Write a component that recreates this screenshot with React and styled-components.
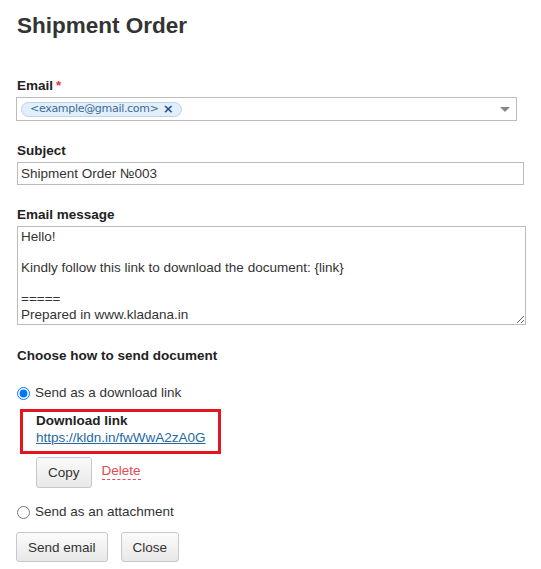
import React from 'react';
import styled, { createGlobalStyle } from 'styled-components';

const GlobalStyle = createGlobalStyle`
  body {
    margin: 0;
    background: #fff;
    font-family: "Liberation Sans", Arial, sans-serif;
    color: #333;
  }
`;

const Page = styled.div`
  padding: 12px 16px 0 16px;
  width: 541px;
  box-sizing: border-box;
`;

const Title = styled.h1`
  margin: 0 0 0 1px;
  font-size: 22.5px;
  line-height: 27px;
  font-weight: bold;
  color: #333;
`;

const Field = styled.div`
  margin-top: ${(p) => p.mt}px;
  display: flex;
  flex-direction: column;
  gap: 3px;
`;

const Label = styled.div`
  font-size: 13.5px;
  line-height: 16px;
  font-weight: bold;
  color: #222;
  padding-left: 1px;
`;

const Required = styled.span`
  color: #e0353b;
  margin-left: 3px;
`;

const SelectBox = styled.div`
  width: 501px;
  height: 24px;
  box-sizing: border-box;
  border: 1px solid #bbb;
  display: flex;
  align-items: center;
  padding: 0 6px 0 4px;
  justify-content: space-between;
`;

const Chip = styled.span`
  display: inline-flex;
  align-items: center;
  gap: 4px;
  height: 15px;
  box-sizing: border-box;
  padding: 0 7px 0 8px;
  border: 1px solid #b9d4ec;
  border-radius: 8px;
  background: #e2eef9;
  font-family: "DejaVu Sans", Verdana, sans-serif;
  font-size: 11px;
  letter-spacing: -0.3px;
  line-height: 12px;
  color: #3a6c98;
`;

const ChipClose = styled.span`
  font-family: "DejaVu Sans", sans-serif;
  font-weight: bold;
  color: #1d5486;
  font-size: 13px;
  line-height: 12px;
  letter-spacing: 0;
`;

const Caret = styled.span`
  width: 0;
  height: 0;
  border-left: 5px solid transparent;
  border-right: 5px solid transparent;
  border-top: 5px solid #888;
`;

const TextInput = styled.input`
  width: 507px;
  height: 23px;
  box-sizing: border-box;
  border: 1px solid #bbb;
  margin: 0 0 0 1px;
  padding: 0 3px;
  font-family: "Liberation Sans", Arial, sans-serif;
  font-size: 13.5px;
  color: #333;
  outline: none;
`;

const TextArea = styled.textarea`
  width: 509px;
  height: 99px;
  box-sizing: border-box;
  border: 1px solid #bbb;
  margin: 0 0 0 1px;
  padding: 2px 3px;
  font-family: "Liberation Sans", Arial, sans-serif;
  font-size: 13.5px;
  line-height: 15.5px;
  color: #333;
  resize: vertical;
  outline: none;
  overflow: hidden;
`;

const SectionTitle = styled(Label)`
  margin-top: 23px;
`;

const RadioRow = styled.label`
  display: flex;
  align-items: center;
  margin-top: ${(p) => p.mt}px;
  font-size: 13.5px;
  line-height: 16px;
  color: #333;
`;

const Radio = styled.input`
  width: 13px;
  height: 13px;
  margin: 0 5px 0 1px;
  accent-color: #0075ff;
`;

const LinkBlock = styled.div`
  padding-left: 4px;
  margin-top: 8px;
`;

const LinkBox = styled.div`
  display: inline-flex;
  flex-direction: column;
  border: 3px solid #e3161f;
  padding: 1px 12px 4px 13px;
`;

const LinkTitle = styled.div`
  font-size: 13.5px;
  line-height: 16px;
  font-weight: bold;
  color: #222;
`;

const Link = styled.a`
  font-size: 13.5px;
  line-height: 18px;
  color: #2468a2;
  text-decoration: underline;
`;

const Actions = styled.div`
  display: flex;
  align-items: center;
  gap: ${(p) => p.gap}px;
  margin-top: ${(p) => p.mt}px;
  padding-left: ${(p) => p.pl || 0}px;
`;

const Button = styled.button`
  height: ${(p) => p.h}px;
  padding: 0 ${(p) => p.px}px;
  border: 1px solid #c8c8c8;
  border-radius: 3px;
  background: linear-gradient(#fbfbfb, #e8e8e8);
  font-family: "Liberation Sans", Arial, sans-serif;
  font-size: 13.5px;
  color: #333;
  cursor: pointer;
`;

const DangerLink = styled.span`
  color: #e04a4f;
  font-size: 13.5px;
  line-height: 16px;
  border-bottom: 1px dashed #e04a4f;
  margin-top: -3px;
`;

export default function App() {
  return (
    <Page>
      <GlobalStyle />
      <Title>Shipment Order</Title>

      <Field mt={39}>
        <Label>
          Email<Required>*</Required>
        </Label>
        <SelectBox>
          <Chip>
            &lt;example@gmail.com&gt;<ChipClose>×</ChipClose>
          </Chip>
          <Caret />
        </SelectBox>
      </Field>

      <Field mt={22}>
        <Label>Subject</Label>
        <TextInput defaultValue="Shipment Order №003" />
      </Field>

      <Field mt={22}>
        <Label>Email message</Label>
        <TextArea
          defaultValue={
            'Hello!\n\nKindly follow this link to download the document: {link}\n\n=====\nPrepared in www.kladana.in'
          }
        />
      </Field>

      <SectionTitle>Choose how to send document</SectionTitle>

      <RadioRow mt={21}>
        <Radio type="radio" name="send" defaultChecked />
        Send as a download link
      </RadioRow>

      <LinkBlock>
        <LinkBox>
          <LinkTitle>Download link</LinkTitle>
          <Link href="#">https://kldn.in/fwWwA2zA0G</Link>
        </LinkBox>
        <Actions gap={10} mt={3} pl={16}>
          <Button h={31} px={11}>Copy</Button>
          <DangerLink>Delete</DangerLink>
        </Actions>
      </LinkBlock>

      <RadioRow mt={16}>
        <Radio type="radio" name="send" />
        Send as an attachment
      </RadioRow>

      <Actions gap={13} mt={12}>
        <Button h={30} px={11}>Send email</Button>
        <Button h={30} px={11}>Close</Button>
      </Actions>
    </Page>
  );
}
